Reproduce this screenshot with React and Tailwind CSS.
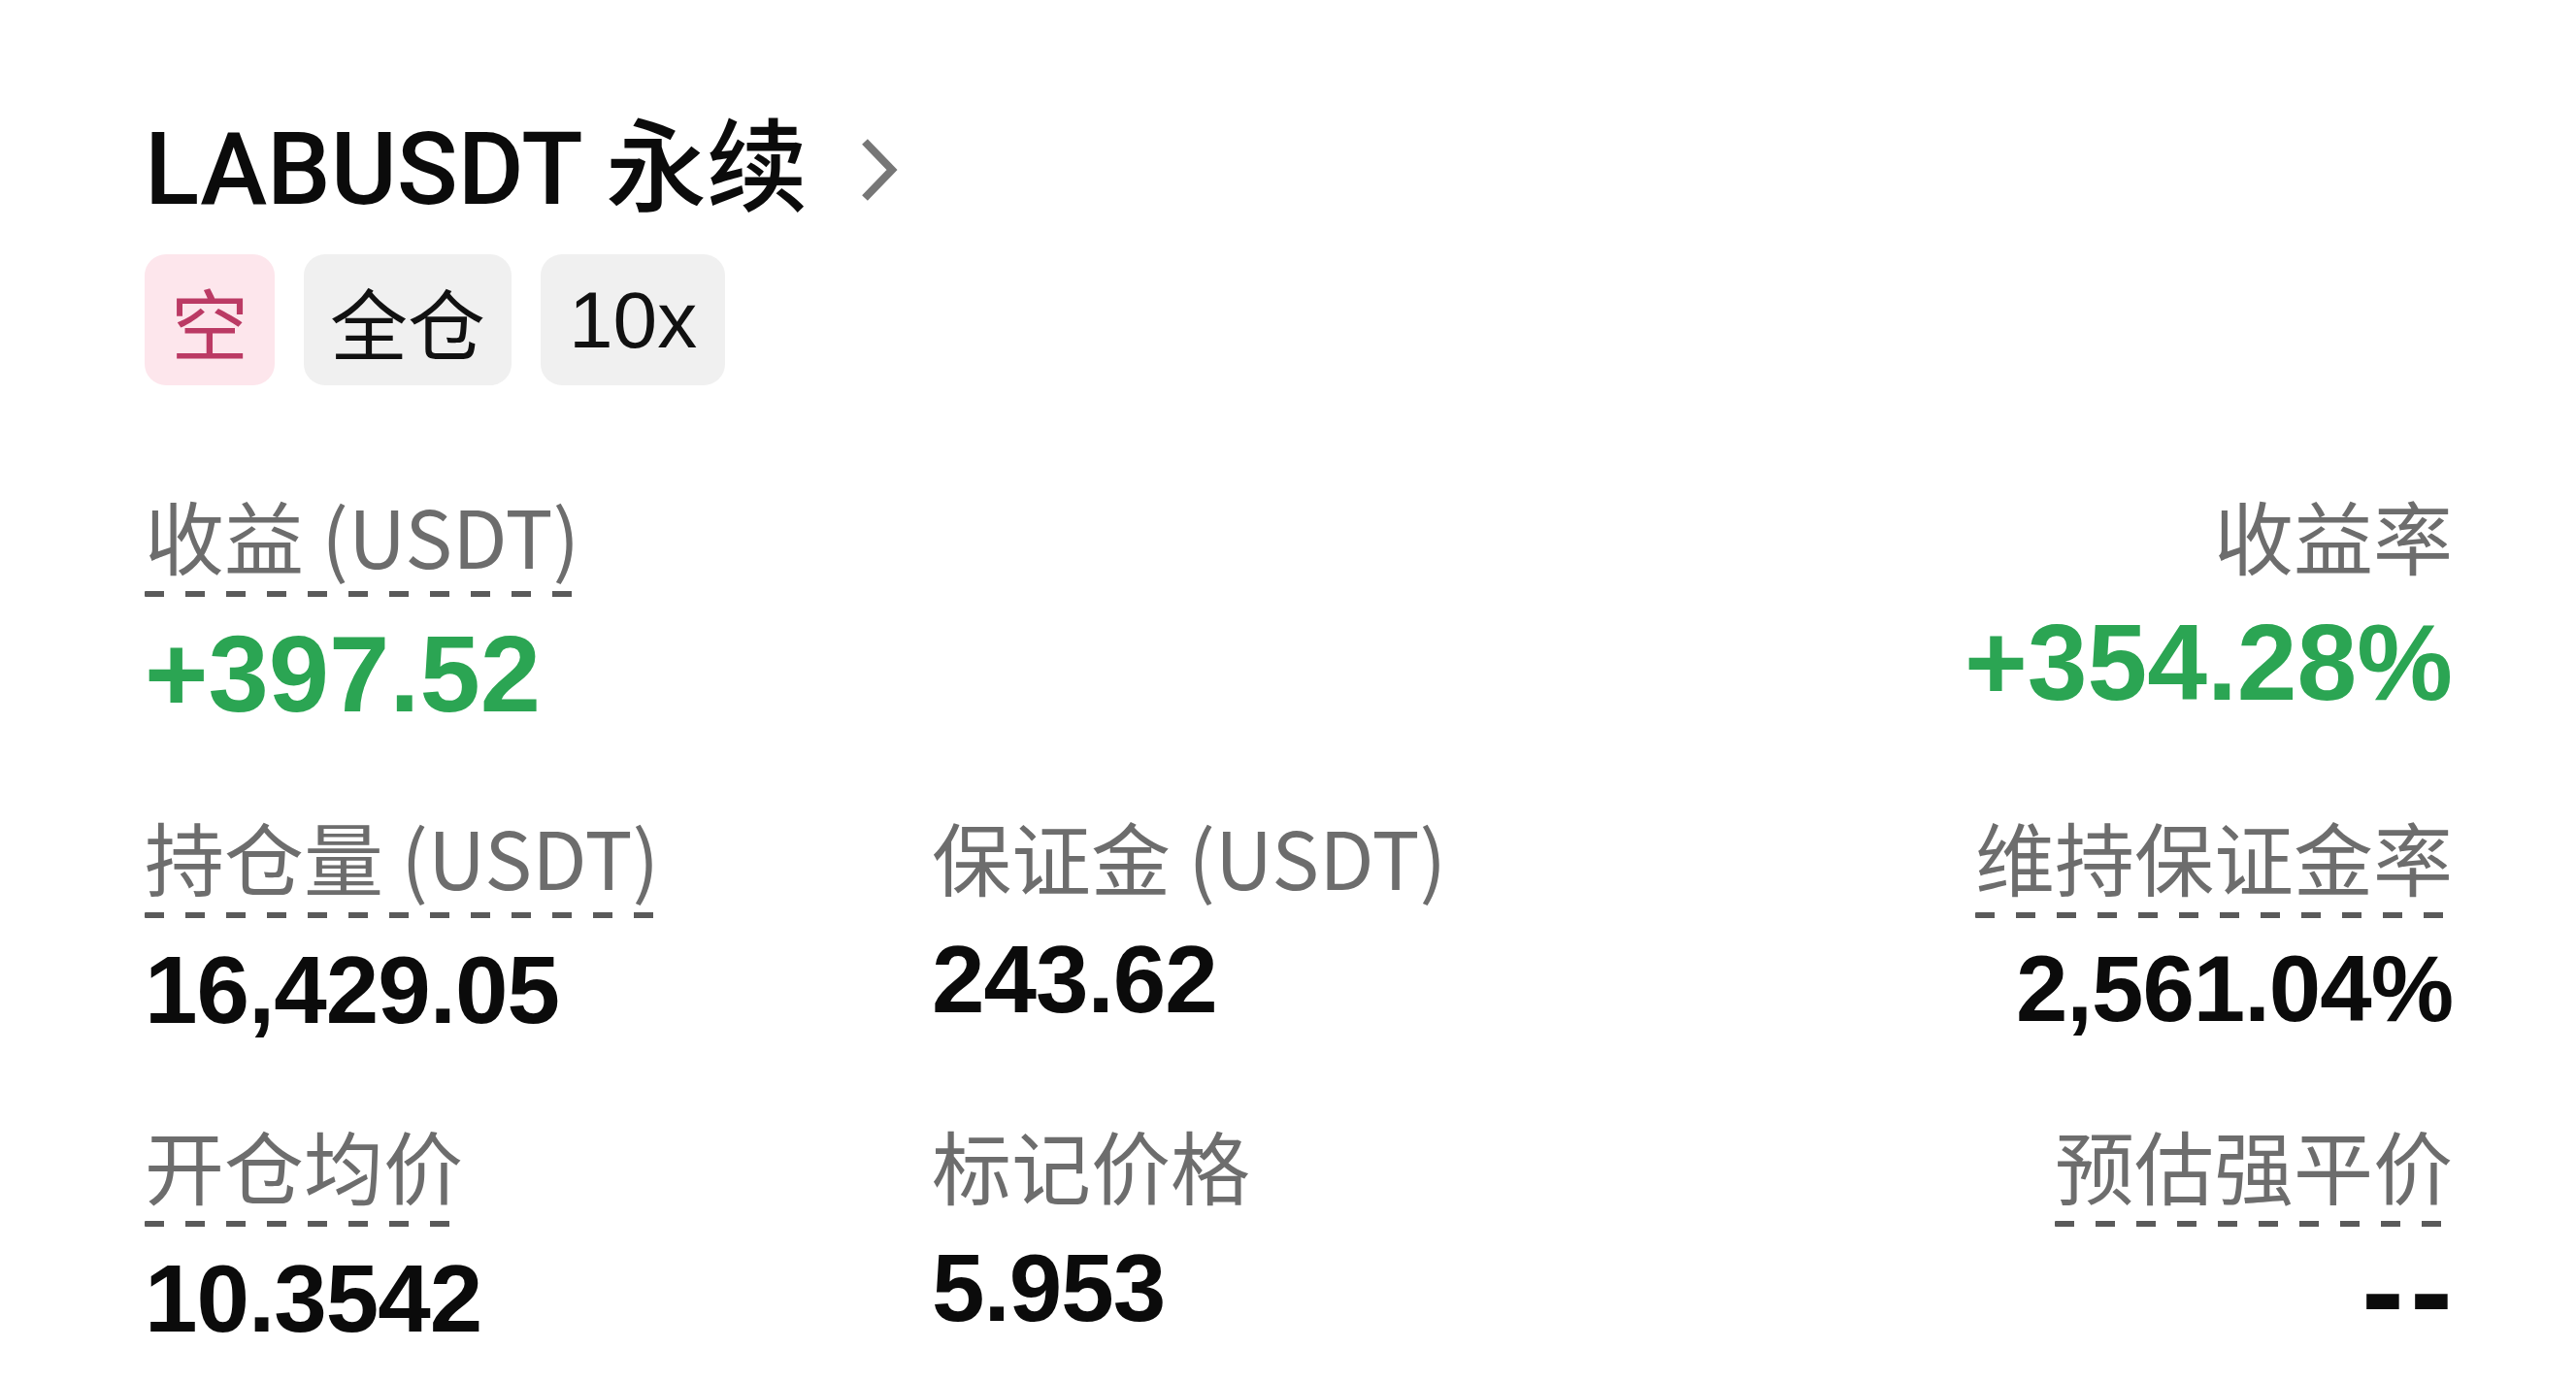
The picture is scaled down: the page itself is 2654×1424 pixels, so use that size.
import React from "react";

const Dash = () => (
  <div className="mt-[17px] h-[6px] w-full rounded-[1px] bg-[repeating-linear-gradient(to_right,#5a5a5a_0px,#5a5a5a_20px,transparent_20px,transparent_42px)]" />
);

function Cell({ label, value, dashed, align = "left", valueClass = "font-bold mt-[25px]" }) {
  const alignCls = align === "right" ? "items-end text-right" : "items-start text-left";
  return (
    <div className={`flex flex-col ${alignCls}`}>
      <div className="flex w-fit flex-col">
        <div className="whitespace-nowrap font-['Noto_Sans_CJK_SC',sans-serif] text-[82px] leading-none text-[#6d6d6d]">
          {label}
        </div>
        {dashed ? <Dash /> : <div className="h-[12px]" />}
      </div>
      <div
        className={`whitespace-nowrap font-['Liberation_Sans',sans-serif] leading-none ${valueClass}`}
      >
        {value}
      </div>
    </div>
  );
}

export default function App() {
  return (
    <div className="min-h-screen w-full bg-white">
      <div className="pl-[149px] pr-[127px] pt-[123px]">
        {/* Title */}
        <div className="flex items-center">
          <div className="whitespace-nowrap font-['Roboto','Noto_Sans_CJK_SC',sans-serif] text-[104px] font-medium leading-none text-[#0b0b0b]">
            LABUSDT 永续
          </div>
          <svg className="ml-[54px]" width="40" height="66" viewBox="0 0 40 66" fill="none">
            <polyline
              points="5,4 33,33 5,62"
              stroke="#777777"
              strokeWidth="8"
              strokeLinecap="butt"
              strokeLinejoin="miter"
              fill="none"
            />
          </svg>
        </div>

        {/* Badges */}
        <div className="mt-[35px] flex gap-[30px]">
          <div className="flex h-[135px] items-center justify-center rounded-[22px] bg-[#fde6ec] px-[27px] font-['Noto_Sans_CJK_SC',sans-serif] text-[80px] leading-none text-[#bb3a64]">
            空
          </div>
          <div className="flex h-[135px] items-center justify-center rounded-[22px] bg-[#f0f0f0] px-[27px] font-['Noto_Sans_CJK_SC',sans-serif] text-[80px] leading-none text-[#111111]">
            全仓
          </div>
          <div className="flex h-[135px] items-center justify-center rounded-[22px] bg-[#f0f0f0] px-[29px] font-['Liberation_Sans',sans-serif] text-[82px] leading-none text-[#111111]">
            10x
          </div>
        </div>

        {/* Data grid */}
        <div className="mt-[113px] grid grid-cols-[811px_1fr_auto] gap-y-[90px]">
          {/* Row 1 */}
          <div className="flex flex-col items-start">
            <div className="flex w-fit flex-col">
              <div className="whitespace-nowrap font-['Noto_Sans_CJK_SC',sans-serif] text-[82px] leading-none text-[#6d6d6d]">
                收益 (USDT)
              </div>
              <Dash />
            </div>
            <div className="mt-[24px] whitespace-nowrap font-['Liberation_Sans',sans-serif] text-[112px] font-bold leading-none text-[#2ba553]">
              +397.52
            </div>
          </div>
          <div />
          <div className="flex flex-col items-end">
            <div className="whitespace-nowrap font-['Noto_Sans_CJK_SC',sans-serif] text-[82px] leading-none text-[#6d6d6d]">
              收益率
            </div>
            <div className="h-[12px]" />
            <div className="mt-[24px] whitespace-nowrap font-['Liberation_Sans',sans-serif] text-[111px] font-bold leading-none text-[#2ba553]">
              +354.28%
            </div>
          </div>

          {/* Row 2 */}
          <Cell label="持仓量 (USDT)" value="16,429.05" dashed valueClass="mt-[25px] font-bold text-[98px] tracking-[-1px] text-[#0b0b0b]" />
          <Cell label="保证金 (USDT)" value="243.62" valueClass="mt-[25px] font-bold text-[98px] tracking-[-1px] text-[#0b0b0b]" />
          <Cell label="维持保证金率" value="2,561.04%" dashed align="right" valueClass="mt-[25px] font-bold text-[96px] tracking-[-1px] text-[#0b0b0b]" />

          {/* Row 3 */}
          <Cell label="开仓均价" value="10.3542" dashed valueClass="mt-[25px] font-bold text-[98px] tracking-[-1px] text-[#0b0b0b]" />
          <Cell label="标记价格" value="5.953" valueClass="mt-[25px] font-bold text-[98px] tracking-[-1px] text-[#0b0b0b]" />
          <Cell label="预估强平价" value="--" dashed align="right" valueClass="mt-[0px] mr-[-6px] font-semibold text-[132px] tracking-[6px] text-[#0b0b0b]" />
        </div>
      </div>
    </div>
  );
}
